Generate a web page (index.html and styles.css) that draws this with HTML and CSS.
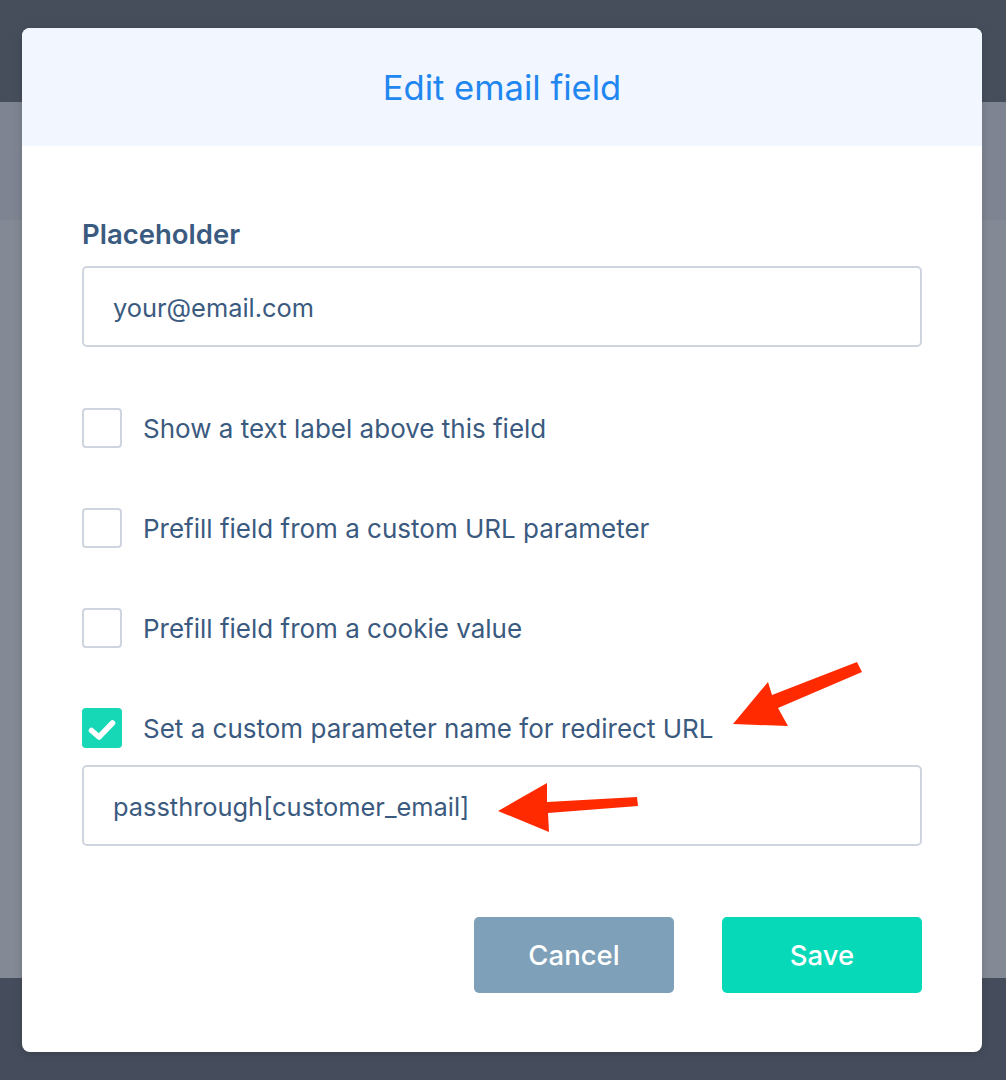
FILE: index.html
```html
<!DOCTYPE html>
<html>
<head>
<meta charset="utf-8">
<link rel="stylesheet" href="styles.css">
</head>
<body>
<div class="backdrop">
  <div class="bd-top"></div>
  <div class="bd-mid"><div class="bd-mid-a"></div><div class="bd-mid-b"></div></div>
  <div class="bd-bottom"></div>
</div>

<div class="modal">
  <div class="modal-header">Edit email field</div>
  <div class="modal-body">
    <div class="field-label">Placeholder</div>
    <div class="text-input">your@email.com</div>

    <div class="options">
      <div class="option"><span class="checkbox"></span><span class="option-text">Show a text label above this field</span></div>
      <div class="option"><span class="checkbox"></span><span class="option-text">Prefill field from a custom URL parameter</span></div>
      <div class="option"><span class="checkbox"></span><span class="option-text">Prefill field from a cookie value</span></div>
      <div class="option"><span class="checkbox checked"><svg width="40" height="40" viewBox="0 0 40 40"><polyline points="9.5,22.5 17,29 30.5,15" fill="none" stroke="#fff" stroke-width="5.5" stroke-linecap="round" stroke-linejoin="round"/></svg></span><span class="option-text">Set a custom parameter name for redirect URL</span></div>
    </div>
    <div class="text-input param">passthrough[customer_email]</div>

    <div class="actions">
      <button class="btn btn-cancel">Cancel</button>
      <button class="btn btn-save">Save</button>
    </div>
  </div>
</div>

<svg class="annotations" width="1006" height="1080" viewBox="0 0 1006 1080">
  <polygon fill="#ff2a00" points="733,724 768,682 772,695 857,662 862,672 778,708 788,726"/>
  <polygon fill="#ff2a00" points="498,811 547,783 547,802 637,797 638,806 548,813 549,832"/>
</svg>
</body>
</html>
```

FILE: styles.css
```css
* { box-sizing: border-box; }
html, body { margin: 0; padding: 0; }
body {
  width: 1006px;
  height: 1080px;
  overflow: hidden;
  position: relative;
  font-family: Inter, "Noto Sans", "Liberation Sans", sans-serif;
  background: #464e5c;
}
.backdrop {
  display: flex;
  flex-direction: column;
  height: 1080px;
}
.bd-top { height: 102px; background: #464e5c; }
.bd-mid { height: 876px; display: flex; flex-direction: column; }
.bd-mid-a { height: 118px; background: #7e8491; }
.bd-mid-b { flex: 1; background: #838995; }
.bd-bottom { flex: 1; background: #454c5b; }

.modal {
  position: absolute;
  left: 22px;
  top: 28px;
  width: 960px;
  height: 1024px;
  background: #fff;
  border-radius: 8px;
  overflow: hidden;
  box-shadow: 0 2px 8px rgba(0,0,0,0.15);
}
.modal-header {
  height: 118px;
  background: #f1f6ff;
  display: flex;
  align-items: center;
  justify-content: center;
  color: #1f87ef;
  font-size: 34.6px;
  font-weight: 400;
}
.modal-body {
  padding: 72px 60px 60px;
  color: #3b5a7f;
}
.field-label {
  font-size: 27.5px;
  line-height: 32px;
  font-weight: 600;
  color: #3b5a7f;
  margin-bottom: 16px;
}
.text-input {
  height: 81px;
  border: 2px solid #cfd5de;
  border-radius: 5px;
  padding-left: 29px;
  display: flex;
  align-items: center;
  font-size: 25.4px;
  color: #3b5a7f;
  padding-top: 2px;
}
.options {
  display: flex;
  flex-direction: column;
  gap: 60px;
  margin-top: 61px;
}
.option {
  display: flex;
  align-items: center;
  gap: 21px;
  height: 40px;
}
.checkbox {
  width: 40px;
  height: 40px;
  border: 2px solid #cfd5de;
  border-radius: 4px;
  flex: none;
  display: block;
}
.checkbox.checked {
  border: none;
  background: #16d7b6;
}
.checkbox svg { display: block; }
.option-text {
  font-size: 26px;
  color: #3b5a7f;
}
.text-input.param { margin-top: 17px; }
.actions {
  display: flex;
  justify-content: flex-end;
  gap: 48px;
  margin-top: 71px;
}
.btn {
  width: 200px;
  height: 76px;
  border: none;
  border-radius: 5px;
  color: #fff;
  font-family: Inter, "Noto Sans", "Liberation Sans", sans-serif;
  font-size: 27.5px;
  font-weight: 500;
}
.btn-cancel { background: #7ea0b8; }
.btn-save { background: #06d9b8; }
.annotations {
  position: absolute;
  left: 0;
  top: 0;
  pointer-events: none;
}
```
